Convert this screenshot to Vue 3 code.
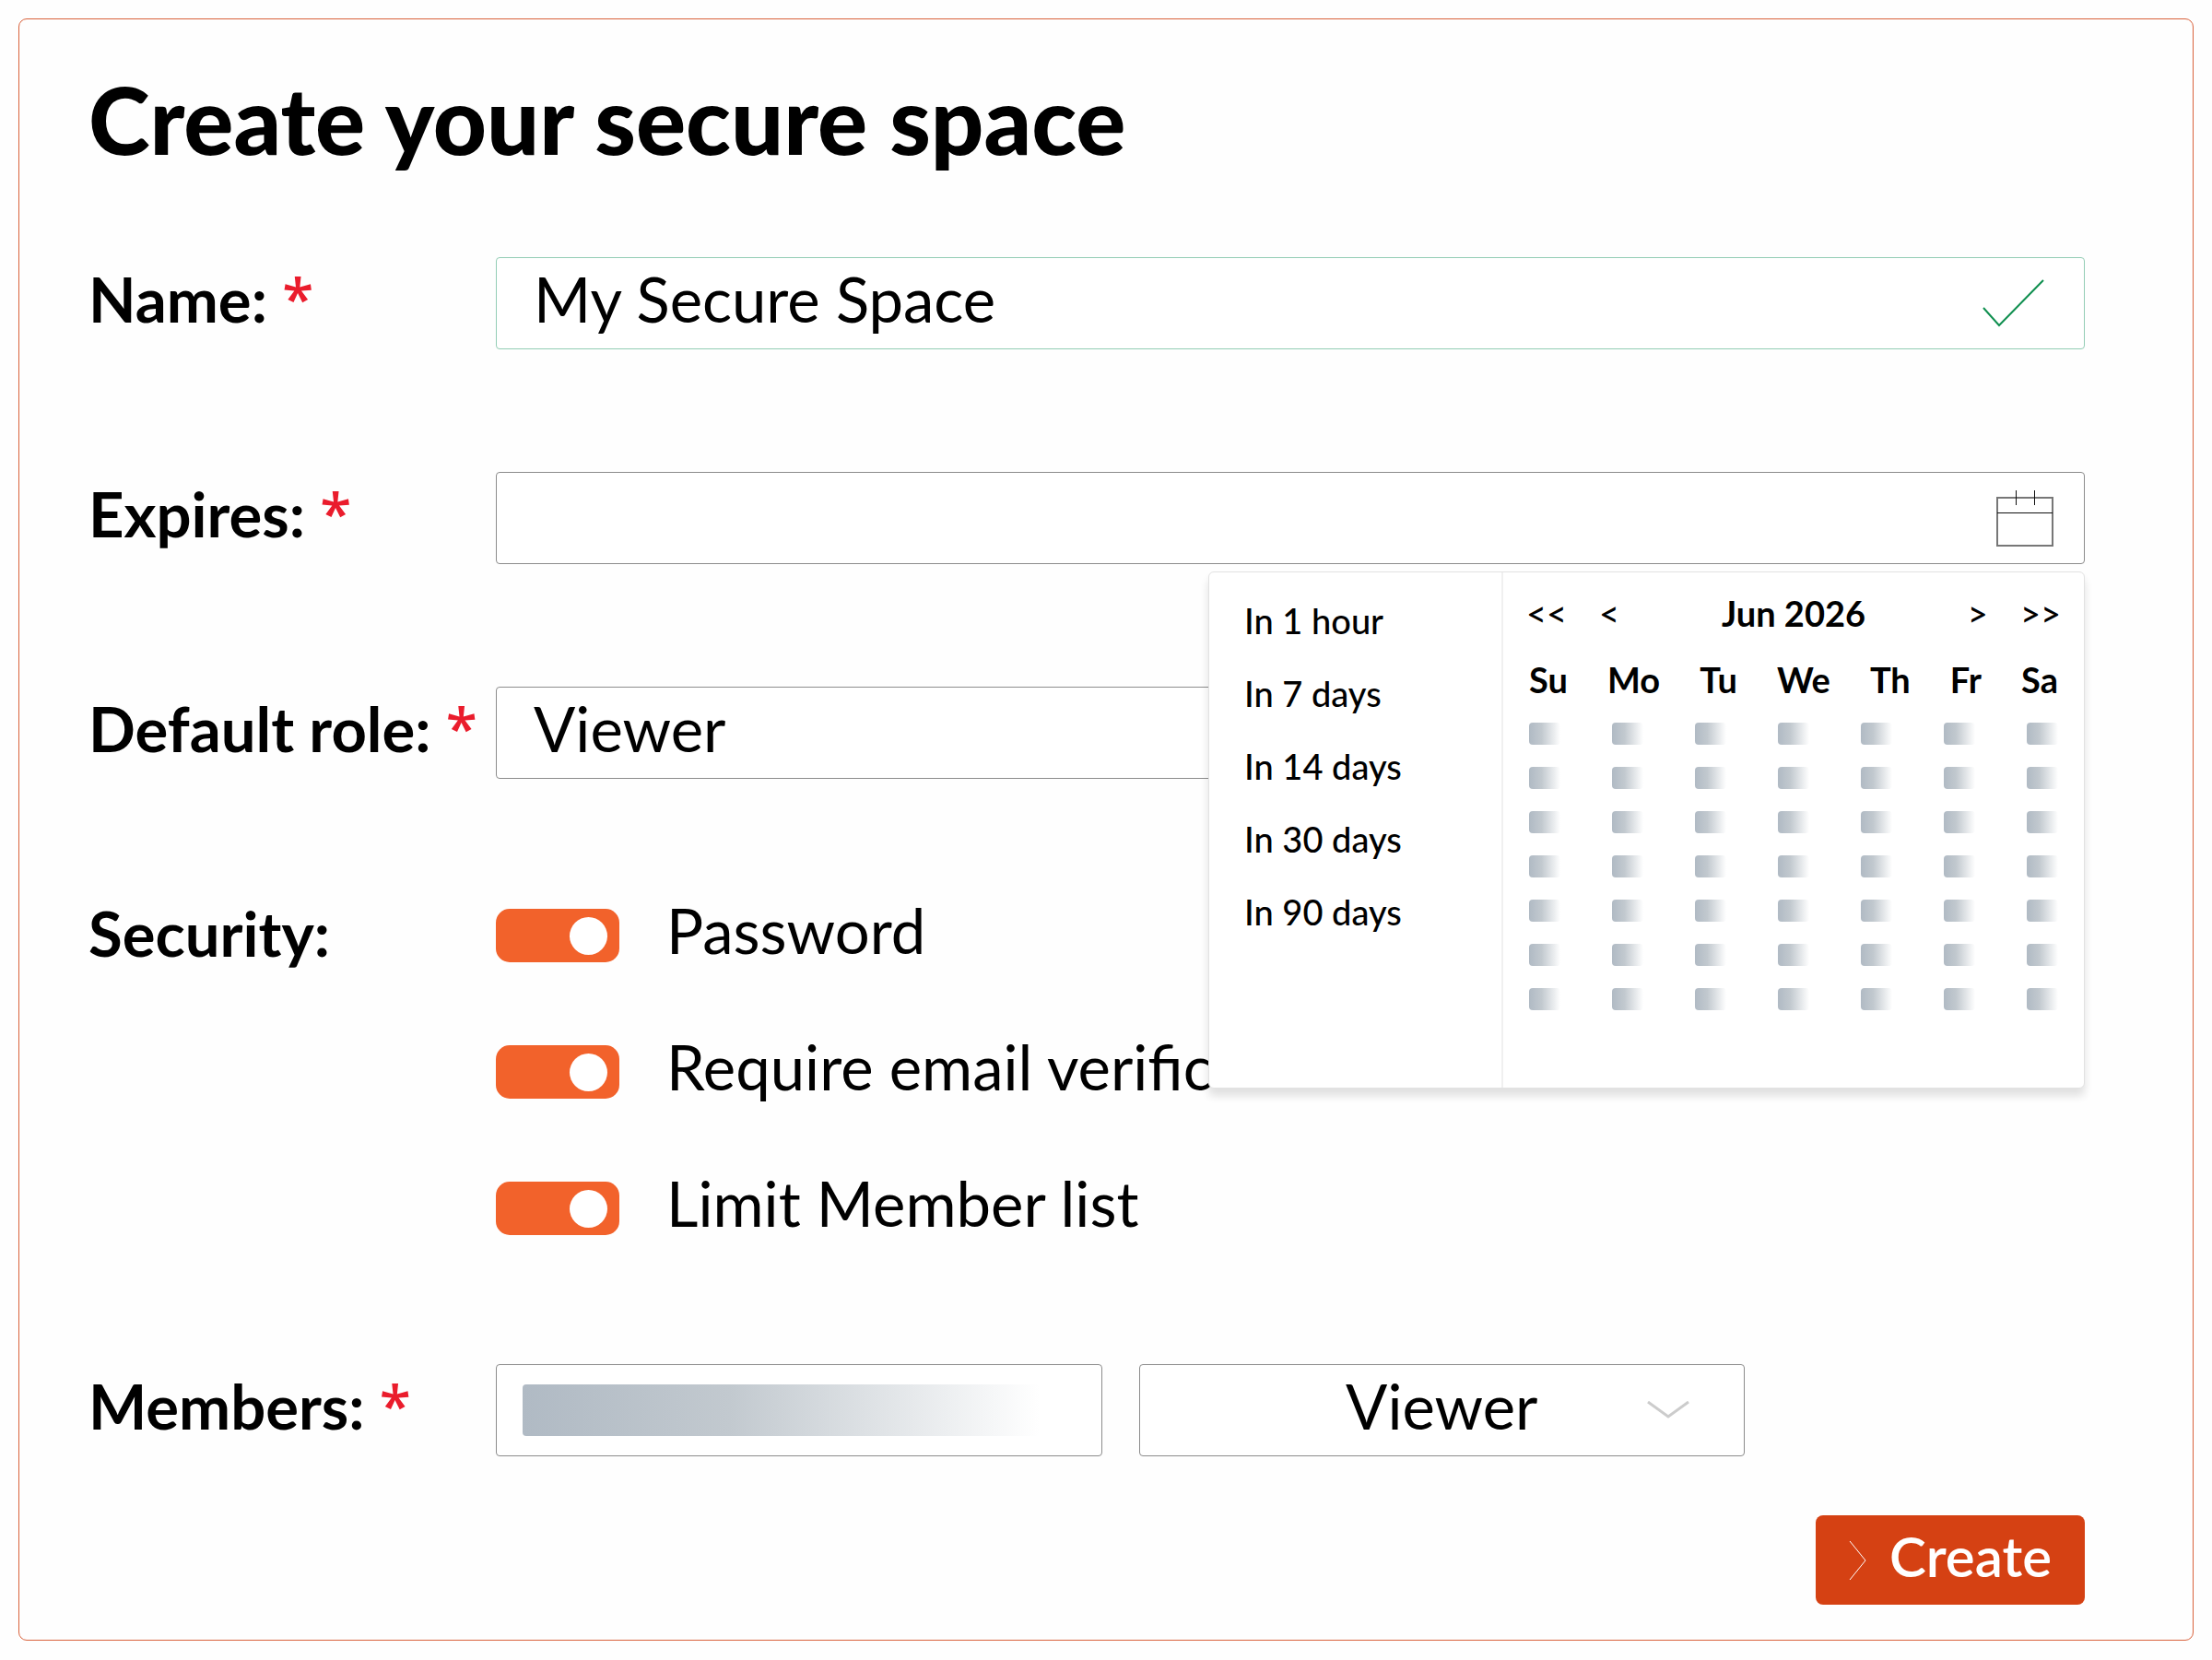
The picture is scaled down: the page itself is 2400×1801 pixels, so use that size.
<script setup>
import { ref } from 'vue'

const name = ref('My Secure Space')
const expires = ref('')
const role = ref('Viewer')
const member = ref('')
const memberRole = ref('Viewer')
const roles = ['Viewer', 'Editor', 'Manager']
const security = ref([
  { id: 'password', label: 'Password', on: true },
  { id: 'verify', label: 'Require email verification', on: true },
  { id: 'limit', label: 'Limit Member list', on: true },
])
const presets = ['In 1 hour', 'In 7 days', 'In 14 days', 'In 30 days', 'In 90 days']
const weekdays = ['Su', 'Mo', 'Tu', 'We', 'Th', 'Fr', 'Sa']
</script>

<template>
  <form class="card" @submit.prevent>
    <h1 class="title">Create your secure space</h1>

    <div class="row">
      <label class="label" for="name">Name: <span class="star">*</span></label>
      <div class="field">
        <input id="name" v-model="name" class="control valid" type="text" />
        <svg class="icon check" viewBox="0 0 68 52" fill="none" stroke="#0f8f4f" stroke-width="2">
          <path d="M1 31 18 50 66 1" />
        </svg>
      </div>
    </div>

    <div class="row">
      <label class="label" for="expires">Expires: <span class="star">*</span></label>
      <div class="field">
        <input id="expires" v-model="expires" class="control" type="text" />
        <button class="icon calendar-button" type="button" aria-label="Open calendar">
          <svg viewBox="0 0 62 62" fill="none" stroke="#111">
            <path d="M1 9H61V61H1Z" stroke="#777" stroke-width="2" />
            <path d="M1 25.500H61M21.500 1V17M41.500 1V17" />
          </svg>
        </button>

        <div class="popup">
          <div class="presets">
            <button v-for="preset in presets" :key="preset" class="preset" type="button">{{ preset }}</button>
          </div>
          <div class="calendar">
            <div class="calendar-nav">
              <div class="steps">
                <button type="button" aria-label="Previous year">&lt;&lt;</button>
                <button type="button" aria-label="Previous month">&lt;</button>
              </div>
              <strong class="month">Jun 2026</strong>
              <div class="steps">
                <button type="button" aria-label="Next month">&gt;</button>
                <button type="button" aria-label="Next year">&gt;&gt;</button>
              </div>
            </div>
            <table class="days">
              <thead>
                <tr>
                  <th v-for="day in weekdays" :key="day" scope="col">{{ day }}</th>
                </tr>
              </thead>
              <tbody>
                <tr v-for="week in 7" :key="week">
                  <td v-for="day in weekdays" :key="day" class="placeholder"></td>
                </tr>
              </tbody>
            </table>
          </div>
        </div>
      </div>
    </div>

    <div class="row role">
      <label class="label" for="role">Default role: <span class="star">*</span></label>
      <div class="field">
        <select id="role" v-model="role" class="control">
          <option v-for="item in roles" :key="item">{{ item }}</option>
        </select>
      </div>
    </div>

    <div class="row security">
      <span id="security-label" class="label">Security:</span>
      <div class="toggles" role="group" aria-labelledby="security-label">
        <div v-for="item in security" :key="item.id" class="toggle">
          <input :id="item.id" v-model="item.on" class="switch" type="checkbox" />
          <label class="toggle-label" :for="item.id">{{ item.label }}</label>
        </div>
      </div>
    </div>

    <div class="row members">
      <label class="label" for="member">Members: <span class="star">*</span></label>
      <div class="member-fields">
        <div class="field">
          <input id="member" v-model="member" class="control" type="text" />
          <span class="placeholder member-placeholder"></span>
        </div>
        <div class="field">
          <select v-model="memberRole" class="control centered" aria-label="Member role">
            <option v-for="item in roles" :key="item">{{ item }}</option>
          </select>
          <svg class="icon chevron" viewBox="0 0 46 20" fill="none" stroke="#ccc" stroke-width="3">
            <path d="M1 1 23 17 45 1" />
          </svg>
        </div>
      </div>
    </div>

    <div class="actions">
      <button class="create" type="submit">
        <svg class="create-icon" viewBox="0 0 20 44" fill="none" stroke="#fff">
          <path d="M1 1 18 22 1 43" />
        </svg>
        <span class="create-text">Create</span>
      </button>
    </div>
  </form>
</template>

<style>
body {
  margin: 0;
  background: #fefefe;
}
</style>

<style scoped>
.card {
  box-sizing: border-box;
  margin: 20px;
  padding: 48px 117px 38px 75px;
  border: 1px solid #d9623c;
  border-radius: 9px;
  color: #000;
  font-family: Lato, sans-serif;
  font-size: 67px;
}

button,
input,
select {
  color: inherit;
  font: inherit;
}

button {
  padding: 0;
  border: 0;
  background: none;
}

.title {
  margin: 0 0 90px;
  font-size: 101px;
  font-weight: 900;
  line-height: 120px;
}

.row {
  display: flex;
  align-items: flex-start;
  margin-bottom: 133px;
}

.label {
  flex: 0 0 442px;
  line-height: 90px;
  font-weight: 700;
  white-space: nowrap;
}

.star {
  color: #ea1c2c;
  font-family: "Open Sans", sans-serif;
  font-size: 62px;
  font-weight: 600;
  line-height: 1;
  vertical-align: 3px;
}

.field {
  position: relative;
  flex: 1;
  display: flex;
  min-width: 0;
}

.control {
  box-sizing: border-box;
  width: 100%;
  height: 100px;
  padding: 0 40px 11px;
  border: 1px solid #8c8c8c;
  border-radius: 4px;
  background: #fff;
  appearance: none;
  outline: 0;
}

.valid {
  border-color: #93cdb5;
}

.centered {
  text-align-last: center;
}

.icon {
  position: absolute;
  top: 0;
  bottom: 0;
  margin: auto;
}

.check {
  right: 43px;
  width: 68px;
  height: 52px;
}

.calendar-button,
.calendar-button svg {
  width: 62px;
  height: 62px;
}

.calendar-button {
  right: 34px;
}

.calendar-button svg {
  display: block;
}

.chevron {
  right: 60px;
  width: 46px;
  height: 20px;
}

.popup {
  position: absolute;
  z-index: 1;
  top: 108px;
  right: 0;
  box-sizing: border-box;
  display: flex;
  width: 951px;
  height: 561px;
  border: 1px solid #e2e2e2;
  border-radius: 6px;
  background: #fff;
  box-shadow: 0 8px 10px rgba(0, 0, 0, 0.12);
  font-size: 38px;
  font-weight: 500;
}

.presets {
  box-sizing: border-box;
  display: flex;
  flex-direction: column;
  align-items: flex-start;
  gap: 31px;
  width: 319px;
  padding: 28px 38px;
  border-right: 2px solid #f0f0f0;
}

.preset {
  line-height: 48px;
}

.calendar {
  flex: 1;
  padding: 20px 28px 0;
}

.calendar-nav {
  display: flex;
  align-items: center;
  justify-content: space-between;
  margin: 0 -3px;
  line-height: 48px;
}

.steps {
  display: flex;
  gap: 35px;
}

.month {
  font-weight: 700;
}

.days {
  display: block;
  margin-top: 26px;
}

.days thead,
.days tbody {
  display: block;
}

.days tr {
  display: flex;
  justify-content: space-between;
}

.days th {
  padding: 0;
  font-weight: 700;
  line-height: 45px;
}

.days tbody tr {
  margin-top: 24px;
}

.placeholder {
  border-radius: 4px;
  background: linear-gradient(90deg, #b0bac4, #c2c9cf 40%, #fff);
}

.days .placeholder {
  width: 34px;
  height: 24px;
  padding: 0;
}

.role {
  margin-bottom: 122px;
}

.security {
  margin-bottom: 122px;
}

.toggles {
  display: flex;
  flex-direction: column;
  gap: 54px;
  padding-top: 1px;
}

.toggle {
  display: flex;
  align-items: center;
  gap: 51px;
}

.toggle-label {
  max-width: 592px;
  padding-bottom: 12px;
  overflow: hidden;
  line-height: 82px;
  white-space: nowrap;
}

.switch {
  display: flex;
  align-items: center;
  justify-content: flex-end;
  width: 134px;
  height: 58px;
  margin: 0;
  padding-right: 13px;
  box-sizing: border-box;
  border-radius: 15px;
  background: #f2622b;
  appearance: none;
}

.switch::before {
  content: "";
  width: 41px;
  height: 41px;
  border-radius: 50%;
  background: #fff;
}

.members {
  margin-bottom: 64px;
}

.member-fields {
  display: flex;
  flex: 1;
  gap: 40px;
  margin-right: 369px;
}

.member-placeholder {
  position: absolute;
  top: 22px;
  left: 29px;
  right: 68px;
  height: 56px;
}

.actions {
  display: flex;
  justify-content: flex-end;
}

.create {
  display: flex;
  align-items: center;
  gap: 24px;
  height: 97px;
  padding: 0 36px;
  border-radius: 8px;
  background: #d54113;
  color: #fff;
  font-size: 60px;
  font-weight: 600;
}

.create-icon {
  width: 20px;
  height: 44px;
}

.create-text {
  padding-bottom: 10px;
}
</style>
